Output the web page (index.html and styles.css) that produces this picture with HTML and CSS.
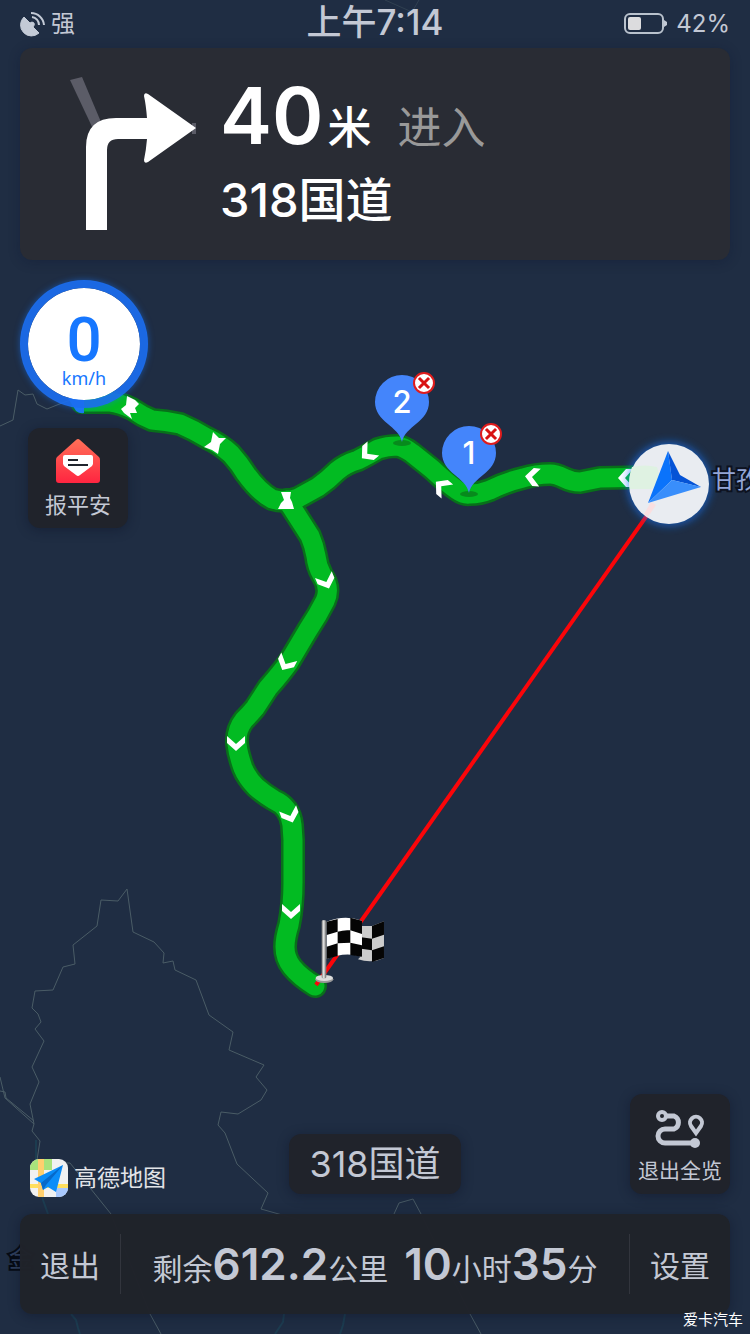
FILE: index.html
```
<!DOCTYPE html>
<html lang="zh-CN">
<head>
  <meta charset="UTF-8">
  <meta name="viewport" content="width=device-width, initial-scale=1.0">
  <title>高德地图 - 导航</title>
  <link rel="stylesheet" href="styles.css">
</head>
<body>
  <div class="app">
    <!-- Map -->
    <svg class="map" viewBox="0 0 750 1334" preserveAspectRatio="xMidYMid slice">
      <defs>
        <path id="chevron" d="M-9 -7 L0 1 L9 -7 V0 L0 8 L-9 0 Z" fill="#fff"/>
        <path id="pin" d="M0 40 C-3 24 -27 20 -27 0 A27 27 0 0 1 27 0 C27 20 3 24 0 40 Z" fill="#4485fb"/>
        <path id="road-main" d="M82 402 L110 402 Q120 403 132 409 Q142 416 152 420 Q166 421 180 424 Q194 430 207 438 Q220 444 231 454 Q240 464 246 474 Q259 492 272 499 Q285 503 298 498 L318 487 Q328 480 337 471 Q345 464 358 460 Q368 455 378 449 Q387 446 397 446 Q404 447 412 453 L432 469 Q447 483 457 490 Q464 495 470 494 Q480 494 490 490 Q506 482 523 478 Q536 474 550 474 Q556 474 564 478 Q572 482 580 482 L600 478 L657 477"/>
        <path id="road-branch" d="M287 500 L310 536 Q314 545 316 556 Q317 566 322 575 Q331 588 325 601 Q318 615 308 630 L289 662 Q282 672 268 688 L255 708 Q250 714 244 720 Q236 730 237 744 Q238 754 243 768 Q247 778 256 787 Q264 794 274 800 Q290 807 292 825 L293 840 V883 Q293 905 289 925 Q285 938 285 947 Q285 958 292 967 Q300 977 315 986"/>
        <filter id="glow" x="-30%" y="-30%" width="160%" height="160%">
          <feGaussianBlur stdDeviation="4"/>
        </filter>
      </defs>

      <g class="borders">
        <path d="M0 426 L13 420 L18 390 L25 395 L33 394 L37 404 L47 409 L62 403 L85 395"/>
        <path d="M127 889 L118 901 L101 900 L97 926 L73 945 L75 964 L63 967 L53 990 L35 991 L32 1008 L38 1014 L41 1022 L35 1029 L44 1041 L32 1067 L39 1082 L30 1104 L34 1124 L32 1131 L40 1141 L37 1160"/>
        <path d="M127 889 L133 932 L154 942 L164 953 L163 963 L173 961 L175 970 L196 980 L209 1015 L233 1032 L229 1050 L264 1065 L256 1077 L267 1090 L261 1100 L238 1114 L221 1112 L218 1125 L225 1133 L237 1164 L268 1193 L261 1209 L300 1220"/>
        <path d="M0 1077 L5 1098 L34 1124 M0 1091 L5 1092 L6 1098 L34 1121"/>
        <path d="M66 1163 L70 1163 L111 1214 L150 1314 L161 1334"/>
        <path d="M394 1214 L399 1203 L413 1199 L421 1214 L470 1314 L481 1334"/>
        <path d="M385 0 L412 12 L419 0" opacity=".4"/>
      </g>
      <g class="rivers">
        <path d="M36 1140 L36 1165 L43 1200 L48 1214 M71 1314 L76 1320 L78 1328 L80 1334"/>
        <path d="M284 1314 L283 1322 L275 1334 M345 1314 L343 1325 L340 1334"/>
      </g>

      <path d="M68 398 L76 411 Q80 414 84 413 V396 Z" fill="#1b78f0"/>
      <g class="route route-edge">
        <use href="#road-main"/>
        <use href="#road-branch"/>
      </g>
      <g class="route route-fill">
        <use href="#road-main"/>
        <use href="#road-branch"/>
      </g>
      <path d="M68 398 L76 411 Q80 414 84 413 V396 Z" fill="#1b78f0"/>

      <g fill="#fff">
        <path d="M127 396 L135 400 L139 404 L135 408 L137 413 L130 413 L132 419 L124 413 L121 409 L126 405 Z"/>
        <path d="M213 432 L219 438 L226 438 L220 444 L218 454 L212 450 L204 447 L211 442 Z"/>
        <path d="M281 492 H291 L290 498 L292 502 L294 509 H278 L281 503 L284 500 Z"/>
      </g>
      <use href="#chevron" transform="translate(368 453) rotate(50)"/>
      <use href="#chevron" transform="translate(442 487) rotate(130)"/>
      <use href="#chevron" transform="translate(533 477) rotate(95)"/>
      <use href="#chevron" transform="translate(626 478) rotate(90)"/>
      <use href="#chevron" transform="translate(326 581) rotate(-22)"/>
      <use href="#chevron" transform="translate(286 663) rotate(28)"/>
      <use href="#chevron" transform="translate(236 743)"/>
      <use href="#chevron" transform="translate(290 815) rotate(-20)"/>
      <use href="#chevron" transform="translate(291 911)"/>

      <path d="M660 497 L316 985" stroke="#fb0509" stroke-width="4"/>

      <!-- Destination flag -->
      <g transform="translate(200 600) scale(.3333)">
        <path d="M474 978 L516 978 L552 964 V1074 Q516 1092 474 1078 L486 1066 Z" fill="#ccc"/>
        <path d="M516 978 L552 964 V1004 L516 1016 Z M484 1012 L516 1016 V1051 L484 1046 Z M516 1051 L552 1039 V1074 L516 1086 Z" fill="#050505"/>
        <path d="M380 965 Q434 943 486 962 V1070 Q434 1054 380 1077 Z" fill="#fff"/>
        <path d="M380 965 L413 957 V995 L380 1005 Z M451 953 L486 962 V1002 L451 991 Z M413 995 Q432 989 451 991 V1028 L413 1030 Z M380 1040 L413 1030 V1068 L380 1077 Z M451 1028 L486 1036 V1070 L451 1065 Z" fill="#050505"/>
        <ellipse cx="373" cy="1138" rx="27" ry="11" fill="#999"/>
        <ellipse cx="373" cy="1134" rx="26" ry="9" fill="#ddd"/>
        <rect x="365" y="961" width="14" height="174" rx="4" fill="#888"/>
        <rect x="368" y="961" width="6" height="174" fill="#ddd"/>
      </g>

      <!-- Waypoints -->
      <ellipse cx="402" cy="443" rx="9" ry="3" fill="#078a1c"/>
      <use href="#pin" x="402" y="402"/>
      <text class="pin-label" x="402" y="413">2</text>
      <foreignObject x="413" y="372" width="22" height="22">
        <button class="pin-remove" aria-label="删除途经点2"><svg viewBox="0 0 22 22"><path d="M7 7 L15 15 M15 7 L7 15"/></svg></button>
      </foreignObject>
      <ellipse cx="469" cy="494" rx="9" ry="3" fill="#078a1c"/>
      <use href="#pin" x="469" y="453"/>
      <text class="pin-label" x="469" y="464">1</text>
      <foreignObject x="480" y="423" width="22" height="22">
        <button class="pin-remove" aria-label="删除途经点1"><svg viewBox="0 0 22 22"><path d="M7 7 L15 15 M15 7 L7 15"/></svg></button>
      </foreignObject>

      <!-- Current position -->
      <circle cx="669" cy="484" r="42" fill="#1677ff" opacity=".6" filter="url(#glow)"/>
      <circle cx="669" cy="484" r="40" fill="#e9ecf1"/>
      <path d="M632 467 Q645 464 657 467 Q662 478 652 489 H630 Q628 477 632 467 Z" fill="#dff2e2"/>
      <path d="M651 502 L656 505 L648 517 L644 514 Z" fill="#fadfe0"/>
      <path d="M668 451 L672 480 L648 503 Z" fill="#0a73fb"/>
      <path d="M668 451 L680 475 L701 487 L672 480 Z" fill="#0553d6"/>
      <path d="M672 480 L701 487 L648 503 Z" fill="#398efb"/>

      <text class="place" x="712" y="488">甘孜</text>
      <text class="place place-dim" x="9" y="1267">金</text>
    </svg>

    <header class="status">
      <div class="gps">
        <svg viewBox="0 0 26 26">
          <path d="M4 6 L10 12 Q12 10 14 12 Q15 14 13 16 L19 22 A10 10 0 0 1 4 6 Z" fill="#c3cad6" stroke="#c3cad6"/>
          <path d="M12 6 A8 8 0 0 1 19 14 M11 2 A13 13 0 0 1 24 14" fill="none" stroke="#c3cad6" stroke-width="2"/>
        </svg>
        <span>强</span>
      </div>
      <div class="time">上午7:14</div>
      <div class="battery">
        <svg viewBox="0 0 44 22">
          <rect x="1" y="1" width="38" height="19" rx="5" fill="none" stroke="#b9c2cd" stroke-width="2"/>
          <rect x="4" y="4" width="13" height="13" rx="2" fill="#dcdcde"/>
          <path d="M40 7 L43 9 V12 L40 14 Z" fill="#c3cad6"/>
        </svg>
        <span>42%</span>
      </div>
    </header>

    <section class="guide">
      <svg class="turn" viewBox="0 0 126 154">
        <path d="M0 3 L12 0 L31 45 L24 54 Z" fill="#5b5c67"/>
        <path d="M122 46 H126 V57 H122 Z" fill="#5b5c67"/>
        <path d="M16 153 V70 Q16 41 46 41 H77 Q76 28 74 19 Q74 15 78 17 L126 51 L78 85 Q74 87 74 83 Q76 74 77 62 H48 Q37 62 37 73 V153 Z" fill="#fff"/>
      </svg>
      <div class="guide-text">
        <div class="distance"><strong>40</strong><span class="unit">米</span><span class="action">进入</span></div>
        <div class="next-road">318国道</div>
      </div>
    </section>

    <main class="overlay">
      <div class="side">
        <div class="speed">
          <span class="speed-value">0</span>
          <span class="speed-unit">km/h</span>
        </div>
        <button class="tile safe">
          <svg viewBox="0 0 44 44">
            <defs>
              <linearGradient id="mail" x1="0" y1="0" x2="0" y2="1">
                <stop offset="0" stop-color="#ff7058"/>
                <stop offset="1" stop-color="#ff2540"/>
              </linearGradient>
            </defs>
            <path d="M20 1 Q22 -1 24 1 L43 18 Q44 19 44 21 V41 Q44 44 41 44 H3 Q0 44 0 41 V21 Q0 19 1 18 Z" fill="url(#mail)"/>
            <path d="M9 16 H35 Q37 16 37 18 V25 L36 27 L24 36 Q22 38 20 36 L8 27 L7 25 V18 Q7 16 9 16 Z" fill="#fff"/>
            <path d="M12 21 H22 M12 26 H32" stroke="#20252d" stroke-width="2"/>
          </svg>
          <span>报平安</span>
        </button>
      </div>

      <div class="lower">
        <div class="brand">
          <svg viewBox="0 0 38 38">
            <defs><clipPath id="logo"><rect width="38" height="38" rx="9"/></clipPath></defs>
            <g clip-path="url(#logo)">
              <rect width="38" height="38" fill="#f1f1f1"/>
              <path d="M0 0 H22 V11 H0 Z" fill="#a9e37c"/>
              <path d="M26 27 H38 V38 H26 Z" fill="#a8c8fd"/>
              <path d="M0 25 H38 V29 H0 Z" fill="#ffde5c"/>
              <path d="M8 0 H14 V38 H8 Z" fill="#ffcf6e"/>
            </g>
            <path d="M33 6 L4 20 L11 24 L13 31 L18 28 L26 33 Z" fill="#0b8df8"/>
            <path d="M33 6 L11 24 L13 31 L16 26 Z" fill="#0769c9"/>
          </svg>
          <span>高德地图</span>
        </div>
        <div class="road">318国道</div>
        <button class="tile overview">
          <svg viewBox="0 0 50 40">
            <g fill="none" stroke="#c3c8d4">
              <circle cx="7" cy="7" r="4" stroke-width="4"/>
              <path d="M11 7 H19 A7 7 0 0 1 19 20 H10 A7 7 0 0 0 10 34 H40" stroke-width="5"/>
              <path d="M41 24 L36 17 A6 6 0 1 1 46 17 Z" stroke-width="4"/>
            </g>
            <circle cx="40" cy="34" r="5" fill="#c3c8d4"/>
          </svg>
          <span>退出全览</span>
        </button>
      </div>
    </main>

    <footer class="bar">
      <button class="bar-btn">退出</button>
      <p class="remain">剩余<b>612.2</b>公里<span class="eta"><b>10</b>小时<b>35</b>分</span></p>
      <button class="bar-btn">设置</button>
    </footer>
    <div class="watermark">爱卡汽车</div>
  </div>
</body>
</html>
```
FILE: styles.css
```
* {
  box-sizing: border-box;
}

body {
  margin: 0;
  background-color: #1f2d43;
  color: #c3c8d4;
  font-family: Inter, "Noto Sans CJK SC", sans-serif;
}

button {
  border: none;
  padding: 0;
  color: inherit;
  font-family: inherit;
  cursor: pointer;
}

.app {
  position: relative;
  display: flex;
  flex-direction: column;
  min-height: 100vh;
  padding: 0 20px 20px;
  overflow: hidden;
}

/* Map */
.map {
  position: absolute;
  top: 0;
  left: 0;
  width: 100%;
  height: 100%;
}

.borders path {
  fill: none;
  stroke: #4a5c66;
  stroke-width: 1;
}

.rivers path {
  fill: none;
  stroke: #1c3c50;
  stroke-width: 2;
}

.route {
  fill: none;
  stroke-linecap: round;
  stroke-linejoin: round;
}

.route-edge {
  stroke: #08701a;
  stroke-width: 24;
}

.route-fill {
  stroke: #02bb22;
  stroke-width: 19;
}

.pin-label {
  fill: #fff;
  font-size: 31px;
  font-weight: 500;
  text-anchor: middle;
}

.pin-remove {
  display: block;
  width: 22px;
  height: 22px;
  border: 2px solid #e01c1c;
  border-radius: 50%;
  background-color: #fff;
}

.pin-remove svg {
  display: block;
  width: 22px;
  height: 22px;
  margin: -2px;
  stroke: #d81414;
  stroke-width: 3;
  stroke-linecap: square;
}

.place {
  fill: #93a5d6;
  stroke: #0d1220;
  stroke-width: 4;
  paint-order: stroke;
  font-size: 24px;
}

.place-dim {
  fill: #2f3f5c;
  stroke: #060b14;
}

/* Status */
.status {
  position: relative;
  display: grid;
  grid-template-columns: 1fr auto 1fr;
  align-items: center;
  height: 48px;
  line-height: 44px;
}

.gps,
.battery {
  display: flex;
  align-items: center;
  gap: 5px;
  font-size: 24px;
}

.gps svg {
  width: 26px;
  height: 26px;
}

.battery {
  justify-content: flex-end;
  gap: 8px;
}

.battery svg {
  width: 44px;
  height: 22px;
}

.time {
  padding-bottom: 4px;
  font-size: 35px;
  font-weight: 500;
}

/* Guide */
.guide {
  position: relative;
  display: flex;
  align-items: center;
  gap: 24px;
  height: 212px;
  padding-left: 50px;
  border-radius: 12px;
  background-color: #292c34;
  box-shadow: 0 2px 12px rgba(10, 20, 50, 0.3);
  color: #fff;
}

.turn {
  width: 126px;
  height: 154px;
}

.distance {
  display: flex;
  align-items: baseline;
  height: 92px;
  font-size: 44px;
  line-height: 96px;
}

.distance strong {
  font-size: 78px;
  font-weight: 600;
}

.unit {
  margin-left: 4px;
  font-weight: 500;
}

.action {
  margin-left: 26px;
  color: #999;
}

.next-road {
  font-size: 47px;
  font-weight: 500;
  line-height: 80px;
}

/* Overlay */
.overlay {
  position: relative;
  flex: 1;
  display: flex;
  flex-direction: column;
  justify-content: space-between;
  padding: 20px 0 17px;
  pointer-events: none;
}

.overlay button {
  pointer-events: auto;
}

.side {
  display: flex;
  flex-direction: column;
  align-items: flex-start;
  gap: 20px;
}

.speed {
  display: flex;
  flex-direction: column;
  align-items: center;
  width: 128px;
  height: 128px;
  padding-top: 24px;
  border: 8px solid rgba(27, 110, 240, 0.92);
  border-radius: 50%;
  background-color: #fff;
  background-clip: padding-box;
  box-shadow: 0 0 6px rgba(22, 119, 255, 0.5);
  color: #1677ff;
  font-family: "Noto Sans", sans-serif;
}

.speed-value {
  font-family: Roboto, sans-serif;
  font-size: 62px;
  font-weight: 500;
  line-height: 56px;
}

.speed-unit {
  font-size: 18px;
  line-height: 20px;
}

.tile {
  display: flex;
  flex-direction: column;
  align-items: center;
  width: 100px;
  height: 100px;
  border-radius: 12px;
  background-color: #20232b;
  box-shadow: 0 2px 12px rgba(10, 15, 35, 0.4);
  font-size: 22px;
  line-height: 32px;
}

.safe {
  gap: 6px;
  margin-left: 8px;
  padding-top: 11px;
}

.safe svg {
  width: 44px;
  height: 44px;
}

.lower {
  display: grid;
  grid-template-columns: 1fr auto 1fr;
  align-items: end;
}

.brand {
  display: flex;
  align-items: center;
  gap: 6px;
  height: 38px;
  margin-left: 10px;
  color: #e2e4e8;
  font-size: 23px;
  line-height: 34px;
}

.brand svg {
  width: 38px;
  height: 38px;
}

.road {
  margin-bottom: 3px;
  padding: 0 20px;
  border-radius: 12px;
  background-color: #20232b;
  box-shadow: 0 2px 12px rgba(10, 15, 35, 0.4);
  font-size: 36px;
  line-height: 60px;
}

.overview {
  justify-self: end;
  gap: 6px;
  margin-bottom: 3px;
  padding-top: 15px;
  font-size: 21px;
  white-space: nowrap;
}

.overview svg {
  width: 50px;
  height: 40px;
}

/* Bottom bar */
.bar {
  position: relative;
  display: flex;
  align-items: center;
  height: 100px;
  border-radius: 12px;
  background-color: rgba(32, 35, 42, 0.98);
  box-shadow: 0 2px 12px rgba(10, 15, 35, 0.4);
}

.bar-btn {
  width: 101px;
  height: 60px;
  background: none;
  font-size: 30px;
}

.bar-btn:first-child {
  border-right: 1px solid #32353d;
}

.bar-btn:last-child {
  border-left: 1px solid #32353d;
}

.remain {
  flex: 1;
  margin: 0;
  padding-top: 4px;
  font-size: 30px;
  line-height: 60px;
  text-align: center;
  white-space: nowrap;
}

.remain b {
  font-size: 44px;
  font-weight: 600;
}

.eta {
  margin-left: 16px;
}

.watermark {
  position: absolute;
  right: 7px;
  bottom: 4px;
  color: #fff;
  font-size: 15px;
  line-height: 20px;
}
```
